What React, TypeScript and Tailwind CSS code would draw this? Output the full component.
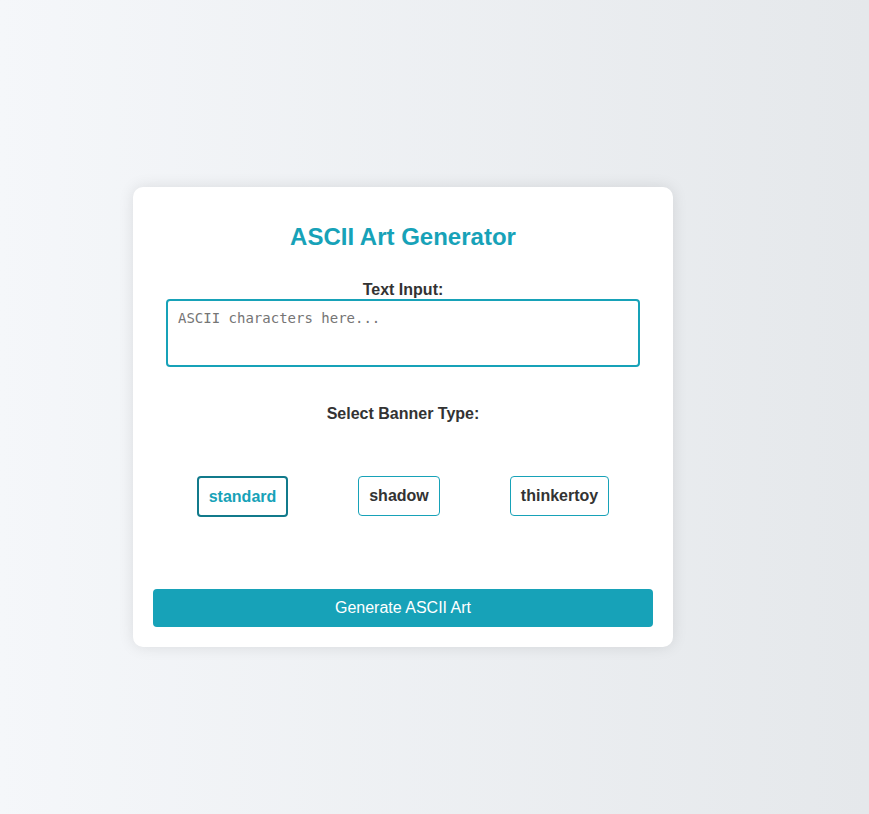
import React, { useState } from "react";

export default function App() {
  const [sel, setSel] = useState("standard");
  const types = [
    { id: "standard", w: "w-[91px] h-[41px]" },
    { id: "shadow", w: "w-[82px] h-[40px]" },
    { id: "thinkertoy", w: "w-[99px] h-[40px]" },
  ];
  return (
    <div
      className="min-h-[814px] w-full bg-gradient-to-r from-[#f5f7fa] to-[#e5e8eb] pt-[187px] pl-[133px]"
      style={{ fontFamily: '"Liberation Sans", Arial, sans-serif' }}
    >
      <div className="w-[540px] rounded-[10px] bg-white px-[20px] pt-[20px] pb-[20px] shadow-[0_0_15px_rgba(0,0,0,0.1)]">
        <h1 className="mt-[16px] h-[28px] text-center text-[24px] font-bold leading-[28px] text-[#17a2b8]">
          ASCII Art Generator
        </h1>
        <label className="mt-[30px] block h-[18px] text-center text-[16px] font-bold leading-[18px] text-[#333]">
          Text Input:
        </label>
        <textarea
          className="mx-auto mt-0 block h-[68px] w-[474px] resize-none rounded-[4px] border-2 border-[#17a2b8] px-[10px] py-[8px] text-[14px] leading-[18px] text-[#333] outline-none placeholder:text-[#757575]"
          style={{ fontFamily: '"DejaVu Sans Mono", monospace' }}
          placeholder="ASCII characters here..."
        />
        <div className="mt-[38px] h-[18px] text-center text-[16px] font-bold leading-[18px] text-[#333]">
          Select Banner Type:
        </div>
        <div className="mt-[53px] flex items-start justify-center gap-[70px]">
          {types.map((t) => {
            const active = sel === t.id;
            return (
              <button
                key={t.id}
                onClick={() => setSel(t.id)}
                className={
                  active
                    ? `${t.w} flex items-center justify-center rounded-[4px] border-2 border-[#117a8b] bg-white text-[16px] font-bold text-[#17a2b8]`
                    : `${t.w} flex items-center justify-center rounded-[4px] border border-[#17a2b8] bg-white text-[16px] font-bold text-[#333]`
                }
              >
                {t.id}
              </button>
            );
          })}
        </div>
        <button className="mt-[72px] flex h-[38px] w-full items-center justify-center rounded-[4px] bg-[#17a2b8] text-[16px] text-white">
          Generate ASCII Art
        </button>
      </div>
    </div>
  );
}
